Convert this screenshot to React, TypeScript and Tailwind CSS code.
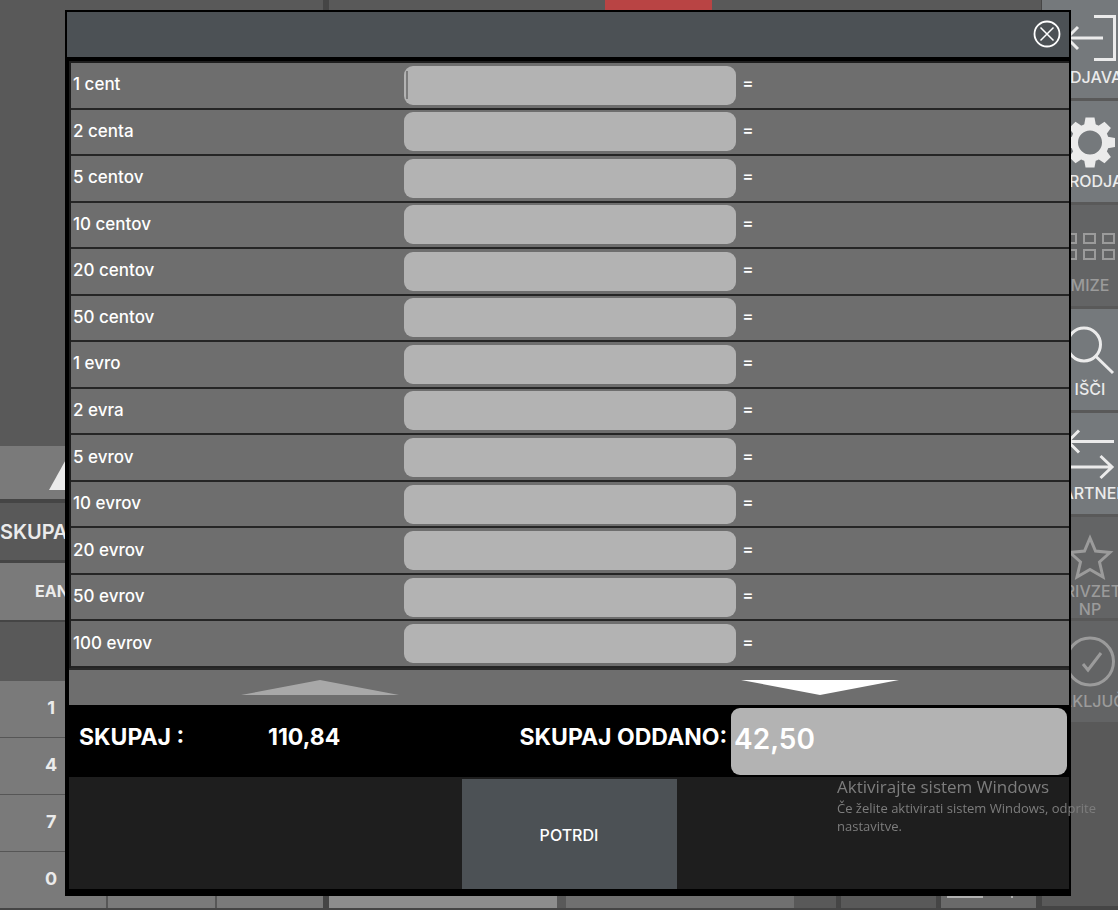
import { useState } from "react";
import type { ReactNode } from "react";

const denominations: string[] = [
  "1 cent",
  "2 centa",
  "5 centov",
  "10 centov",
  "20 centov",
  "50 centov",
  "1 evro",
  "2 evra",
  "5 evrov",
  "10 evrov",
  "20 evrov",
  "50 evrov",
  "100 evrov",
];

const keypad: string[] = ["1", "2", "3", "4", "5", "6", "7", "8", "9", "0", ",", "C"];

const LogoutIcon = () => (
  <g fill="none" stroke="currentColor" strokeWidth="3">
    <path d="M34 8.500H54.500V51.500H34" />
    <path d="M43 30H7M18 19L7 30L18 41" />
  </g>
);

const GearIcon = () => (
  <g fill="currentColor">
    <circle cx="30" cy="30.500" r="15.500" fill="none" stroke="currentColor" strokeWidth="7" />
    {[0, 45, 90, 135, 180, 225, 270, 315].map((angle) => (
      <path key={angle} d="M24 14L25.500 5.500H34.500L36 14Z" transform={`rotate(${angle} 30 30.500)`} />
    ))}
  </g>
);

const TablesIcon = () => (
  <g fill="none" stroke="currentColor" strokeWidth="2">
    {[18, 34].map((y) =>
      [5, 24, 43].map((x) => <rect key={`${x}-${y}`} x={x} y={y} width="11" height="9" />)
    )}
  </g>
);

const SearchIcon = () => (
  <g fill="none" stroke="currentColor" strokeWidth="3">
    <circle cx="24" cy="24.500" r="16.500" />
    <path d="M36 36.500L53 53" />
  </g>
);

const PartnerIcon = () => (
  <g fill="none" stroke="currentColor" strokeWidth="3">
    <path d="M54 17.500H8M19 6.500L8 17.500L19 28.500" />
    <path d="M6 43H52M40.500 32L52 43L40.500 54" />
  </g>
);

const StarIcon = () => (
  <path
    d="M30 10L35.500 23L50 24.500L39.500 34L43 49L30 41.500L17 49L20.500 34L10 24.500L24.500 23Z"
    fill="none"
    stroke="currentColor"
    strokeWidth="3"
  />
);

const CheckIcon = () => (
  <g fill="none" stroke="currentColor" strokeWidth="3">
    <circle cx="30" cy="29.500" r="23.500" />
    <path d="M23 32L28 38L41 21" />
  </g>
);

interface SideItem {
  label: string;
  icon: ReactNode;
  className: string;
  labelClass?: string;
}

const active = "h-[101px] pt-[11px] bg-[#75797c] text-[#ebebeb]";
const disabled = "h-[101px] pt-[11px] bg-[#636465] text-[#9b9b9b]";

const sideItems: SideItem[] = [
  { label: "ODJAVA", icon: <LogoutIcon />, className: "h-[98px] pt-2 bg-[#75797c] text-[#ebebeb]" },
  { label: "ORODJA", icon: <GearIcon />, className: active },
  { label: "MIZE", icon: <TablesIcon />, className: disabled },
  { label: "IŠČI", icon: <SearchIcon />, className: active },
  { label: "PARTNER", icon: <PartnerIcon />, className: active },
  { label: "PRIVZETI NP", icon: <StarIcon />, className: disabled, labelClass: "w-20 -mt-1.5" },
  { label: "ZAKLJUČI", icon: <CheckIcon />, className: disabled },
];

const Sidebar = () => (
  <nav className="w-[76px] shrink-0 flex flex-col bg-[#595959] mb-1">
    <div className="w-24 flex flex-col gap-[3px]">
      {sideItems.map((item) => (
        <button key={item.label} className={`flex flex-col items-center ${item.className}`}>
          <svg viewBox="0 0 60 60" className="w-[60px] h-[60px] shrink-0">
            {item.icon}
          </svg>
          <span className={`text-base leading-[18px] font-medium ${item.labelClass ?? ""}`}>
            {item.label}
          </span>
        </button>
      ))}
    </div>
  </nav>
);

const Register = () => (
  <section className="w-[323px] shrink-0 flex flex-col justify-end text-[#ebebeb]">
    <div className="flex-1 bg-[#595959]" />
    <button aria-label="Gor" className="h-[53px] shrink-0 bg-[#7a7a7a] flex items-center pl-[49px] pb-0.5">
      <svg viewBox="0 0 40 36" className="w-10 h-9 fill-current">
        <path d="M0 36L20 0L40 36Z" />
      </svg>
    </button>
    <div className="h-[57px] shrink-0 mt-1 bg-[#595959] flex items-center text-xl font-semibold">
      SKUPAJ
    </div>
    <button className="h-[57px] shrink-0 mt-[3px] bg-[#7a7a7a] pl-[35px] pb-0.5 text-left text-base font-bold">
      EAN
    </button>
    <div className="h-[59px] shrink-0 mt-0.5 bg-[#595959]" />
    <div className="grid grid-cols-3 gap-x-0.5 gap-y-[1px] shrink-0 bg-[#565656] mb-0.5">
      {keypad.map((key) => (
        <button key={key} className="h-14 bg-[#7a7a7a] text-lg font-bold pr-1 pb-0.5">
          {key}
        </button>
      ))}
    </div>
  </section>
);

const Workspace = () => (
  <section className="flex-1 min-w-0 flex flex-col">
    <div className="flex-1 -mr-[5px] bg-[#595959] flex items-start pl-[276px]">
      <div className="w-[107px] h-12 bg-[#b94444]" />
    </div>
    <div className="h-[52px] shrink-0 flex gap-[5px] mb-0.5">
      <div className="flex-1 flex gap-[9px] bg-[#595959]">
        <div className="w-[228px] bg-[#8d8d8d]" />
        <div className="w-[228px] bg-[#707070]" />
      </div>
      <div className="w-[95px] bg-[#595959]" />
      <div className="w-[95px] bg-[#6a6a6a] flex items-end gap-7 pl-1.5 pb-2.5">
        <div className="w-9 h-0.5 bg-[#b0b0b0]" />
        <div className="w-0.5 h-0.5 bg-[#b0b0b0]" />
      </div>
    </div>
  </section>
);

const CountTable = () => {
  const [counts, setCounts] = useState<string[]>(denominations.map(() => ""));

  return (
    <div className="flex-1 min-h-0 ml-0.5 border-l-2 border-t-2 border-[#1e1e1e] bg-[#6e6e6e]">
      <table className="w-full h-full table-fixed border-separate border-spacing-0 text-[17px] leading-6 font-medium text-white">
        <tbody>
          {denominations.map((name, index) => (
            <tr key={name}>
              <th scope="row" className="p-0 pl-0.5 pb-0.5 border-b-2 border-[#252525] text-left font-medium">
                <label htmlFor={`count-${index}`}>{name}</label>
              </th>
              <td className="p-0 border-b-2 border-[#252525]">
                <div className="relative">
                  <input
                    id={`count-${index}`}
                    inputMode="numeric"
                    value={counts[index]}
                    onChange={(e) =>
                      setCounts(counts.map((c, i) => (i === index ? e.target.value : c)))
                    }
                    className="block w-full h-[39px] rounded-[9px] bg-[#b3b3b3] px-1 text-2xl outline-none"
                  />
                  {index === 0 && (
                    <span className="absolute left-0.5 top-[5px] w-0.5 h-7 bg-[#7b7b7b]" />
                  )}
                </div>
              </td>
              <td className="p-0 pl-1.5 pb-1 border-b-2 border-[#252525]">=</td>
            </tr>
          ))}
        </tbody>
      </table>
    </div>
  );
};

const CashDialog = () => {
  const [total, setTotal] = useState("42,50");

  return (
    <div
      role="dialog"
      aria-label="Štetje gotovine"
      className="flex-1 min-w-0 flex flex-col border-2 border-black bg-black"
    >
      <header className="h-[45px] shrink-0 mb-1 bg-[#4c5155] flex items-center justify-end pr-2 pb-0.5">
        <button aria-label="Zapri" className="text-white">
          <svg viewBox="0 0 28 28" className="w-7 h-7" fill="none" stroke="currentColor">
            <circle cx="14" cy="14" r="12.500" strokeWidth="1.800" />
            <path d="M7.500 7.500L20.500 20.500M20.500 7.500L7.500 20.500" strokeWidth="1.500" />
          </svg>
        </button>
      </header>

      <CountTable />

      <div className="h-[37px] shrink-0 ml-0.5 border-t-2 border-[#2a2a2a] bg-[#6e6e6e] grid grid-cols-2">
        <button aria-label="Prejšnja stran" className="flex items-center justify-center pl-0.5 text-[#a8a8a8]">
          <svg viewBox="0 0 158 15" className="w-[158px] h-[15px] fill-current">
            <path d="M0 15L79 0L158 15Z" />
          </svg>
        </button>
        <button aria-label="Naslednja stran" className="flex items-center justify-center pl-0.5 text-white">
          <svg viewBox="0 0 158 15" className="w-[158px] h-[15px] fill-current">
            <path d="M0 0H158L79 15Z" />
          </svg>
        </button>
      </div>

      <div className="h-[72px] shrink-0 flex items-center text-white text-[23px] font-bold pl-3 pr-0.5">
        <span className="w-[189px] pb-2">SKUPAJ :</span>
        <span className="flex-1 pb-2">110,84</span>
        <label htmlFor="total" className="pb-2 pr-1">
          SKUPAJ ODDANO:
        </label>
        <input
          id="total"
          value={total}
          onChange={(e) => setTotal(e.target.value)}
          className="w-[34%] h-[67px] rounded-[9px] bg-[#b3b3b3] pl-[3px] pb-1 text-[28px] font-semibold outline-none"
        />
      </div>

      <footer className="h-28 shrink-0 ml-0.5 mb-[5px] pt-0.5 bg-[#1e1e1e] flex justify-center">
        <button className="w-[215px] pt-0.5 bg-[#4c5155] text-white text-base font-medium">POTRDI</button>
      </footer>
    </div>
  );
};

const App = () => {
  return (
    <div className="relative h-screen overflow-hidden bg-[#454545] font-['Inter','Liberation_Sans',sans-serif]">
      <main className="h-full flex gap-[6px]">
        <Register />
        <Workspace />
        <Sidebar />
      </main>

      <div className="fixed inset-0 flex pt-2.5 pb-3.5 pl-[65px] pr-[47px]">
        <CashDialog />
      </div>

      {/* system watermark, drawn over every window */}
      <div className="pointer-events-none absolute right-5 bottom-[75px] w-[261px] font-['Open_Sans','Noto_Sans',sans-serif] text-[#7d7d7d]">
        <p className="text-[17px] leading-6">Aktivirajte sistem Windows</p>
        <p className="text-[13px] leading-[18px] whitespace-nowrap">
          Če želite aktivirati sistem Windows, odprite
          <br />
          nastavitve.
        </p>
      </div>
    </div>
  );
};

export default App;
